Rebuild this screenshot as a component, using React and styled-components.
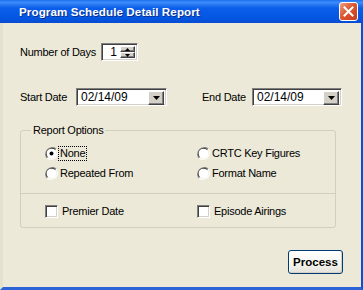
import React from 'react';
import styled, { createGlobalStyle } from 'styled-components';

const Global = createGlobalStyle`
  html, body { margin: 0; padding: 0; background: #ece9d8; }
  body {
    font-family: "Liberation Sans", Arial, sans-serif;
    font-size: 11px;
    letter-spacing: -0.25px;
    color: #000;
  }
`;

const Window = styled.div`
  width: 363px;
  height: 290px;
  display: flex;
  flex-direction: column;
  background: #ece9d8;
  overflow: hidden;
`;

const TitleBar = styled.div`
  height: 23px;
  flex: none;
  display: flex;
  align-items: center;
  justify-content: space-between;
  padding: 0 5px 0 19px;
  background: linear-gradient(#1f6ff0 0%, #3d8cfa 10%, #0b5ee9 35%, #0356e2 80%, #0a4bd0 100%);
`;

const Title = styled.div`
  color: #fff;
  font-weight: bold;
  font-size: 11.6px;
  letter-spacing: 0.1px;
  text-shadow: 1px 1px 0 #0b2f8c;
`;

const CloseBtn = styled.div`
  width: 19px;
  height: 19px;
  box-sizing: border-box;
  border: 1px solid #fff;
  border-radius: 3px;
  background: linear-gradient(135deg, #eca088 0%, #dc5830 45%, #c63b1a 100%);
  display: flex;
  align-items: center;
  justify-content: center;
`;

const Frame = styled.div`
  flex: 1;
  display: flex;
  border-right: 2px solid #0a4fd4;
  border-bottom: 3px solid #2a64d6;
  border-left: 3px solid #e4e1d0;
`;

const Body = styled.div`
  flex: 1;
  display: flex;
  flex-direction: column;
  padding: 20px 0 0 17px;
`;

const Row = styled.div`
  display: flex;
  align-items: center;
  margin-top: ${p => p.mt || 0}px;
`;

const Label = styled.span`
  width: ${p => p.w}px;
  margin-left: ${p => p.ml || 0}px;
  flex: none;
  white-space: nowrap;
`;

const Sunken = styled.div`
  box-sizing: border-box;
  height: ${p => p.h || 18}px;
  width: ${p => p.w}px;
  background: #fff;
  border-top: 1px solid #808080;
  border-left: 1px solid #808080;
  border-right: 1px solid #fff;
  border-bottom: 1px solid #fff;
  box-shadow: inset 1px 1px 0 #404040, inset -1px -1px 0 #d4d0c8;
  display: flex;
  align-items: stretch;
  padding: 2px;
`;

const FieldText = styled.div`
  flex: 1;
  display: flex;
  align-items: center;
  justify-content: ${p => (p.right ? 'flex-end' : 'flex-start')};
  padding: 0 ${p => (p.right ? 3 : 2)}px 0 2px;
  font-size: 12px;
  letter-spacing: 0;
`;

const ClassicBtn = styled.div`
  box-sizing: border-box;
  width: ${p => p.w}px;
  height: ${p => p.h}px;
  background: #d4d0c8;
  border-top: 1px solid #fff;
  border-left: 1px solid #fff;
  border-right: 1px solid #404040;
  border-bottom: 1px solid #404040;
  box-shadow: inset -1px -1px 0 #808080;
  display: flex;
  align-items: center;
  justify-content: center;
`;

const SpinCol = styled.div`
  display: flex;
  flex-direction: column;
`;

const Group = styled.div`
  position: relative;
  margin-top: 24px;
  width: 316px;
  height: 98px;
  box-sizing: border-box;
  border: 1px solid #d0d0bf;
  border-radius: 3px;
  display: flex;
  flex-direction: column;
  padding-top: 16px;
`;

const Legend = styled.span`
  position: absolute;
  top: -7px;
  left: 10px;
  padding: 0 2px;
  background: #ece9d8;
  line-height: 13px;
`;

const OptGrid = styled.div`
  display: grid;
  grid-template-columns: 152px 1fr;
  row-gap: 7px;
  padding-left: 24px;
`;

const Opt = styled.div`
  display: flex;
  align-items: center;
  gap: 1px;
  height: 13px;
`;

const OptText = styled.span`
  line-height: 13px;
  padding: 0 1px;
  outline: ${p => (p.focus ? '1px dotted #000' : 'none')};
`;

const Sep = styled.div`
  margin-top: 13px;
  height: 0;
  border-top: 1px solid #d0d0bf;
`;

const CheckRow = styled(OptGrid)`
  margin-top: 11px;
  & ${Opt} { gap: 3px; }
`;

const Box = styled.div`
  width: 13px;
  height: 13px;
  box-sizing: border-box;
  background: #fff;
  border-top: 1px solid #808080;
  border-left: 1px solid #808080;
  border-right: 1px solid #fff;
  border-bottom: 1px solid #fff;
  box-shadow: inset 1px 1px 0 #404040, inset -1px -1px 0 #d4d0c8;
`;

const Footer = styled.div`
  display: flex;
  justify-content: flex-end;
  padding-right: 18px;
  margin-top: 22px;
`;

const Button = styled.button`
  width: 55px;
  height: 24px;
  border: 1px solid #003c74;
  border-radius: 3px;
  background: linear-gradient(#ffffff 0%, #f4f3ee 60%, #e3e1d8 100%);
  box-shadow: inset -1px -1px 0 #d6d0c5, inset 1px 1px 0 #fff;
  font-family: "Liberation Sans", Arial, sans-serif;
  font-weight: bold;
  font-size: 11.5px;
  color: #000;
  padding: 0;
`;

const Radio = ({ on }) => (
  <svg width="13" height="13" viewBox="0 0 12 12">
    <path d="M10.2 1.8A6 6 0 0 0 1.8 10.2" fill="none" stroke="#808080" strokeWidth="1" />
    <path d="M9.5 2.5A5 5 0 0 0 2.5 9.5" fill="none" stroke="#404040" strokeWidth="1" />
    <circle cx="6" cy="6" r="4.5" fill="#fff" />
    <path d="M1.8 10.2A6 6 0 0 0 10.2 1.8" fill="none" stroke="#fff" strokeWidth="1" />
    {on && <circle cx="6" cy="6" r="1.8" fill="#000" />}
  </svg>
);

const Down = () => (
  <svg width="7" height="4" viewBox="0 0 7 4">
    <path d="M0 0h7L3.5 4z" fill="#000" />
  </svg>
);

const Combo = ({ w, value }) => (
  <Sunken w={w}>
    <FieldText>{value}</FieldText>
    <ClassicBtn w={16} h={14}>
      <Down />
    </ClassicBtn>
  </Sunken>
);

export default function App() {
  return (
    <Window>
      <Global />
      <TitleBar>
        <Title>Program Schedule Detail Report</Title>
        <CloseBtn>
          <svg width="11" height="11" viewBox="0 0 11 11">
            <path d="M1.5 1.5l8 8M9.5 1.5l-8 8" stroke="#fff" strokeWidth="2" strokeLinecap="square" />
          </svg>
        </CloseBtn>
      </TitleBar>
      <Frame>
        <Body>
          <Row>
            <Label w={81}>Number of Days</Label>
            <Sunken w={37} h={18}>
              <FieldText right>1</FieldText>
              <SpinCol>
                <ClassicBtn w={15} h={7}>
                  <svg width="5" height="3" viewBox="0 0 5 3"><path d="M2.5 0L5 3H0z" fill="#000" /></svg>
                </ClassicBtn>
                <ClassicBtn w={15} h={7}>
                  <svg width="5" height="3" viewBox="0 0 5 3"><path d="M0 0h5L2.5 3z" fill="#000" /></svg>
                </ClassicBtn>
              </SpinCol>
            </Sunken>
          </Row>
          <Row mt={27}>
            <Label w={56}>Start Date</Label>
            <Combo w={91} value="02/14/09" />
            <Label w={50} ml={35}>End Date</Label>
            <Combo w={90} value="02/14/09" />
          </Row>
          <Group>
            <Legend>Report Options</Legend>
            <OptGrid>
              <Opt><Radio on /><OptText focus>None</OptText></Opt>
              <Opt><Radio /><OptText>CRTC Key Figures</OptText></Opt>
              <Opt><Radio /><OptText>Repeated From</OptText></Opt>
              <Opt><Radio /><OptText>Format Name</OptText></Opt>
            </OptGrid>
            <Sep />
            <CheckRow>
              <Opt><Box /><OptText>Premier Date</OptText></Opt>
              <Opt><Box /><OptText>Episode Airings</OptText></Opt>
            </CheckRow>
          </Group>
          <Footer>
            <Button>Process</Button>
          </Footer>
        </Body>
      </Frame>
    </Window>
  );
}
